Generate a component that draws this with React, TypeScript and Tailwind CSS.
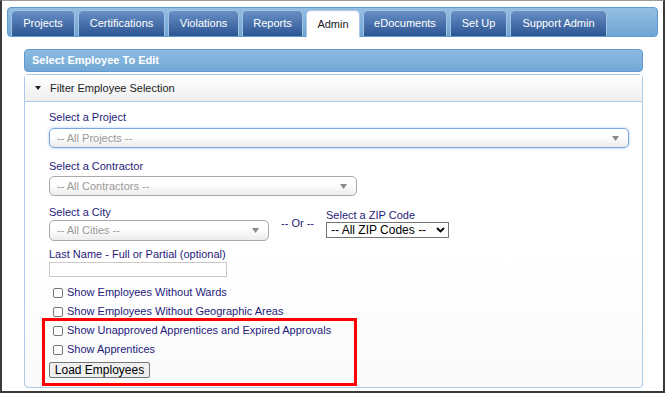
import React from "react";

const tabs = [
  { label: "Projects", w: "w-[64px]" },
  { label: "Certifications", w: "w-[87px]" },
  { label: "Violations", w: "w-[71px]" },
  { label: "Reports", w: "w-[61px]" },
  { label: "Admin", w: "w-[54px]", active: true },
  { label: "eDocuments", w: "w-[84px]" },
  { label: "Set Up", w: "w-[57px]" },
  { label: "Support Admin", w: "w-[97px]" },
];

const checks = [
  "Show Employees Without Wards",
  "Show Employees Without Geographic Areas",
  "Show Unapproved Apprentices and Expired Approvals",
  "Show Apprentices",
];

function Arrow() {
  return (
    <svg width="7" height="5" viewBox="0 0 7 5" className="shrink-0">
      <path d="M0 0 L7 0 L3.5 5 Z" fill="#8a8a8a" />
    </svg>
  );
}

function FancySelect({
  text,
  width,
  height = "h-[20px]",
  focused,
}: {
  text: string;
  width: string;
  height?: string;
  focused?: boolean;
}) {
  return (
    <div
      className={`${width} ${height} flex items-center justify-between rounded-[5px] border bg-linear-to-b from-white from-40% to-[#ececec] pl-[7px] pr-[9px] text-[11px] text-[#999] ${
        focused
          ? "border-[#79a6df] shadow-[0_0_3px_rgba(88,151,251,0.55)]"
          : "border-[#aaaaaa]"
      }`}
    >
      <span>{text}</span>
      <Arrow />
    </div>
  );
}

function Label({ children }: { children: React.ReactNode }) {
  return <div className="h-[13px] text-[11px] leading-[13px] text-[#1f1b7a]">{children}</div>;
}

export default function App() {
  return (
    <div className="relative h-[393px] w-[665px] overflow-hidden border-t border-r-2 border-b-2 border-l-2 border-t-[#9a9a9a] border-r-[#3a3a3a] border-b-[#3a3a3a] border-l-[#3a3a3a] bg-white font-['Liberation_Sans',Arial,sans-serif]">
      <div className="pt-[6px] pl-[5px]">
        {/* tab strip */}
        <div className="flex h-[30px] w-[651px] items-end gap-[3px] rounded-[4px] border border-[#5d98cf] bg-linear-to-b from-[#93bfe2] to-[#6fa4d3] pl-[3px]">
          {tabs.map((t) =>
            t.active ? (
              <div
                key={t.label}
                className={`${t.w} -mb-px flex h-[27px] items-center justify-center rounded-t-[5px] border border-b-0 border-[#a9c7e6] bg-white text-[11px] text-[#222]`}
              >
                {t.label}
              </div>
            ) : (
              <div
                key={t.label}
                className={`${t.w} flex h-[26px] items-center justify-center rounded-t-[5px] border border-b-0 border-[#a4c2e2] bg-linear-to-b from-[#6890c6] to-[#2c5593] text-[11px] text-white`}
              >
                {t.label}
              </div>
            )
          )}
        </div>
      </div>

      <div className="pl-[22px]">
        {/* section header */}
        <div className="mt-[12px] flex h-[23px] w-[619px] items-center rounded-[4px] border border-[#5f99cf] bg-linear-to-b from-[#8dbbe0] to-[#72a8d6] pl-[7px] text-[11px] font-bold text-white">
          Select Employee To Edit
        </div>

        {/* filter panel */}
        <div className="mt-[2px] h-[314px] w-[619px] rounded-[4px] border border-[#abcae8] bg-linear-to-b from-white from-60% to-[#f9fafb]">
          <div className="flex h-[27px] items-center border-b border-[#abcae8] bg-linear-to-b from-white to-[#efefef] pl-[10px] text-[11px] text-[#222]">
            <svg width="6" height="4" viewBox="0 0 6 4" className="mr-[9px]">
              <path d="M0 0 L6 0 L3 4 Z" fill="#222" />
            </svg>
            Filter Employee Selection
          </div>

          <div className="flex flex-col pt-[9px] pl-[24px]">
            <Label>Select a Project</Label>
            <div className="mt-[4px]">
              <FancySelect text="-- All Projects --" width="w-[580px]" focused />
            </div>

            <div className="mt-[12px]">
              <Label>Select a Contractor</Label>
            </div>
            <div className="mt-[3px]">
              <FancySelect text="-- All Contractors --" width="w-[308px]" />
            </div>

            <div className="mt-[10px] flex items-start">
              <div className="flex flex-col">
                <Label>Select a City</Label>
                <div className="mt-[1px]">
                  <FancySelect text="-- All Cities --" width="w-[220px]" height="h-[21px]" />
                </div>
              </div>
              <div className="mt-[11px] ml-[12px] text-[11px] leading-[13px] text-[#1f1b7a]">-- Or --</div>
              <div className="mt-[3px] ml-[12px] flex flex-col">
                <Label>Select a ZIP Code</Label>
                <div className="flex h-[16px] w-[123px] items-center justify-between border border-[#767676] bg-white pr-[3px] pl-[4px] text-[12px] text-black">
                  <span>-- All ZIP Codes --</span>
                  <svg width="9" height="6" viewBox="0 0 9 6">
                    <path d="M1 1 L4.5 4.5 L8 1" fill="none" stroke="#000" strokeWidth="1.8" />
                  </svg>
                </div>
              </div>
            </div>

            <div className="mt-[7px]">
              <Label>Last Name - Full or Partial (optional)</Label>
            </div>
            <input
              type="text"
              className="mt-[1px] h-[15px] w-[178px] border border-[#c9c9c9] bg-white outline-none"
            />

            <div className="mt-[6px] flex flex-col">
              {checks.map((c) => (
                <label key={c} className="flex h-[19px] items-center pl-[4px]">
                  <input
                    type="checkbox"
                    className="h-[10px] w-[10px] appearance-none rounded-[2px] border border-[#767676] bg-white"
                  />
                  <span className="ml-[4px] text-[11px] text-[#1f1b7a]">{c}</span>
                </label>
              ))}
            </div>

            <button className="mt-[3px] flex h-[16px] w-[101px] items-center justify-center rounded-[2px] border border-[#767676] bg-[#efefef] text-[12px] text-black">
              Load Employees
            </button>
          </div>
        </div>
      </div>

      {/* highlight annotation */}
      <div className="pointer-events-none absolute top-[317px] left-[40px] h-[68px] w-[315px] border-[3px] border-[#ff0000]" />
    </div>
  );
}
